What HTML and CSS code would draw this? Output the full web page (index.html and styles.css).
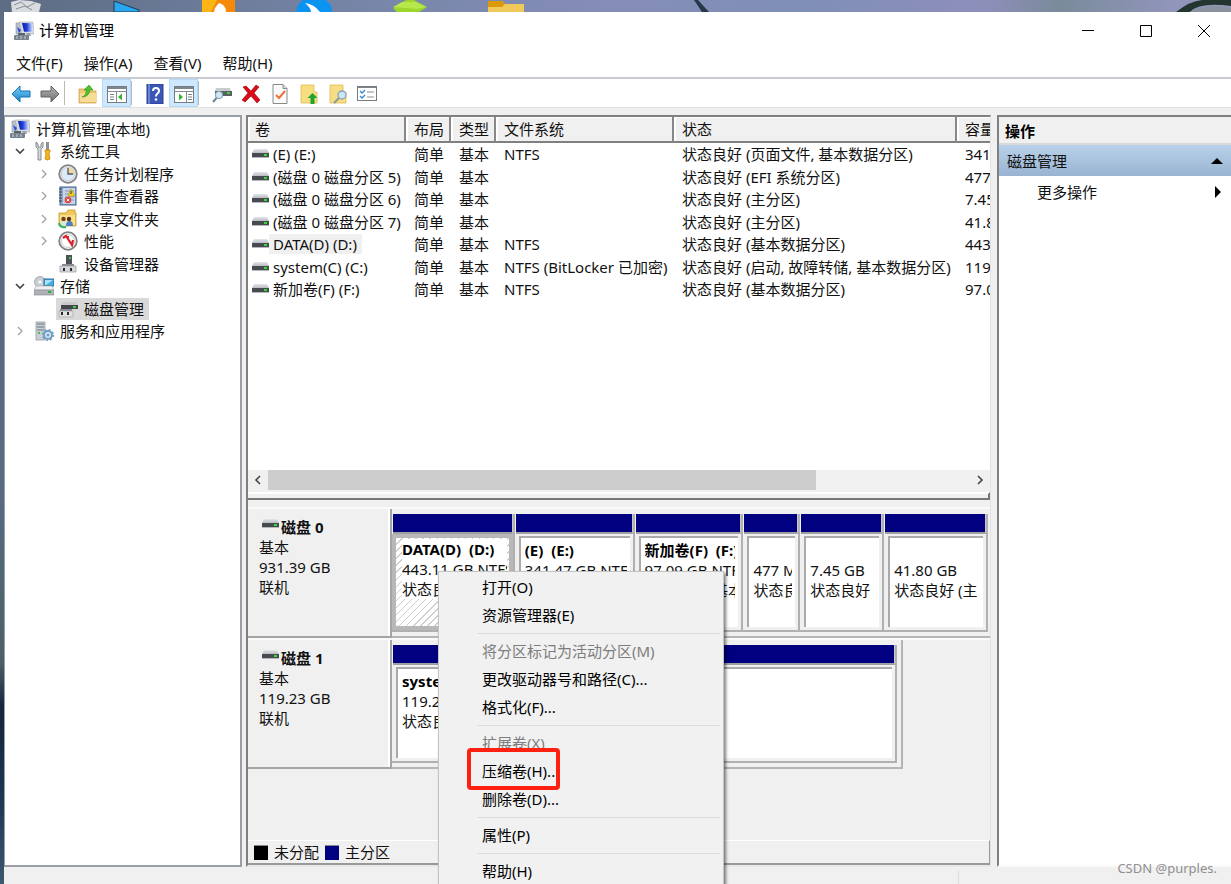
FILE: index.html
```html
<!DOCTYPE html>
<html lang="zh-CN">
<head>
<meta charset="utf-8">
<title>计算机管理</title>
<link rel="stylesheet" href="styles.css">
</head>
<body>
<svg class="defs" aria-hidden="true">
  <defs>
    <linearGradient id="gBlue" x1="0" y1="0" x2="1" y2="0"><stop offset="0" stop-color="#0b1fa8"/><stop offset=".45" stop-color="#1c3bd8"/><stop offset="1" stop-color="#cfe0ff"/></linearGradient>
    <linearGradient id="gArrow" x1="0" y1="0" x2="0" y2="1"><stop offset="0" stop-color="#7fd0f5"/><stop offset="1" stop-color="#1483cf"/></linearGradient>
    <linearGradient id="gGrey" x1="0" y1="0" x2="0" y2="1"><stop offset="0" stop-color="#b5b5b5"/><stop offset="1" stop-color="#6f6f6f"/></linearGradient>
    <linearGradient id="gDisk" x1="0" y1="0" x2="0" y2="1"><stop offset="0" stop-color="#e4e6ea"/><stop offset="1" stop-color="#b9bcc2"/></linearGradient>
  </defs>
  <symbol id="i-computer" viewBox="0 0 20 20">
    <path d="M2 2h5v11H2z" fill="#b8bfc9" stroke="#8f97a3" stroke-width=".6"/>
    <path d="M5 1l14 0 1 12H8z" fill="#d9dde2" stroke="#a2a8b0" stroke-width=".6"/>
    <path d="M8 2l9.500.2 1 8.600H10z" fill="url(#gBlue)"/>
    <path d="M3 6l4 3-2 3z" fill="#2a4bd8"/>
    <path d="M12 12l4 0 1 3h-4z" fill="#9aa1aa"/>
    <rect x="4" y="12" width="7" height="3" fill="#59636e"/>
    <rect x="0" y="14" width="15" height="5" rx="1" fill="#77828e"/>
    <path d="M3 15v3M7 15v3M11 15v3" stroke="#c9d1d8"/>
  </symbol>
  <symbol id="i-disk" viewBox="0 0 17 10">
    <path d="M2 0h13l2 4H0z" fill="url(#gDisk)"/>
    <rect y="4" width="17" height="4" fill="#474b50"/>
    <rect y="8" width="17" height="1" fill="#b4b7bb"/>
    <rect x="12" y="5" width="3" height="2" fill="#2fe02f"/>
  </symbol>
  <symbol id="i-tools" viewBox="0 0 20 20">
    <path d="M2 1v5l2 2v11h3V8l2-2V1L7 3v3H4V3z" fill="#d5d8dc" stroke="#7d8287" stroke-width=".9"/>
    <path d="M12 1h3v8h-3z" fill="#8d9297"/><path d="M11 9h5v2l-1 1 1 6q-2.500 2-5 0l1-6-1-1z" fill="#f4b51a" stroke="#c17f05" stroke-width=".7"/>
  </symbol>
  <symbol id="i-clock" viewBox="0 0 20 20">
    <circle cx="10" cy="10" r="8.800" fill="#eef0f3" stroke="#838487" stroke-width="1.800"/>
    <circle cx="10" cy="10" r="6.800" fill="#dce9f7" stroke="#b8bec6" stroke-width=".7"/>
    <path d="M10 10V3.500a6.500 6.500 0 0 1 6.500 6.500z" fill="#f4d99a"/>
    <path d="M10 4v6h5" fill="none" stroke="#4c5665" stroke-width="1.300"/>
  </symbol>
  <symbol id="i-event" viewBox="0 0 20 20">
    <rect x="2" y="1" width="16" height="18" fill="#93a9cb" stroke="#44618f"/>
    <rect x="5" y="2" width="12" height="16" fill="#c6d3e8"/>
    <path d="M7 5h9M7 8h9M7 11h9M7 14h9" stroke="#879bbd"/>
    <path d="M1 3h3M1 6h3M1 9h3M1 12h3M1 15h3" stroke="#35425b"/>
    <path d="M13 3l4 7h-7z" fill="#f8d21c" stroke="#bb9200" stroke-width=".6"/><path d="M13 5v3" stroke="#333"/>
    <circle cx="10" cy="14" r="3.300" fill="#e2453d"/><path d="M8.800 12.800l2.400 2.400m0-2.400l-2.400 2.400" stroke="#fff"/>
  </symbol>
  <symbol id="i-share" viewBox="0 0 20 20">
    <path d="M1 4h7l2-3h7v3h1v13H1z" fill="#efc95c" stroke="#c99a2d" stroke-width=".8"/>
    <path d="M2 6h15v10H2z" fill="#fae08c"/>
    <circle cx="5.500" cy="10" r="2.200" fill="#6d4222"/><circle cx="11" cy="10" r="2.200" fill="#553018"/>
    <path d="M2 17q0-5 4-5t4 5z" fill="#d8e6dc"/><path d="M8 17q0-5 3.500-5t3.500 5z" fill="#4b80c2"/>
    <path d="M1 14q1 5 7 4" fill="none" stroke="#30b35e" stroke-width="2"/>
  </symbol>
  <symbol id="i-perf" viewBox="0 0 20 20">
    <circle cx="10" cy="10" r="8.800" fill="#f5f6f7" stroke="#808184" stroke-width="1.800"/>
    <circle cx="10" cy="10" r="6.500" fill="#fff" stroke="#b9bbbe" stroke-width=".7"/>
    <path d="M5 7l3-2 6 9 1-5M9 6l2 0" fill="none" stroke="#e01f26" stroke-width="2.200"/>
  </symbol>
  <symbol id="i-device" viewBox="0 0 20 20">
    <path d="M8 1h6v9H8z" fill="#4c5157"/><rect x="11" y="3" width="2" height="2" fill="#35d03a"/>
    <path d="M4 10h12v2H4z" fill="#85898e"/><path d="M2 12h16v6H2z" fill="#d5d8db" stroke="#96999d" stroke-width=".7"/>
    <path d="M6 14v3M13 14v3" stroke="#272a2d" stroke-width="2"/>
  </symbol>
  <symbol id="i-storage" viewBox="0 0 20 20">
    <circle cx="6" cy="6" r="5.500" fill="#c9ced4" stroke="#999fa6" stroke-width=".8"/><circle cx="6" cy="6" r="1.600" fill="#fff"/>
    <rect x="10" y="3" width="10" height="7" fill="#45aee0" stroke="#2a6f98"/><path d="M11 4h8l-7 5h-1z" fill="#a6e0fa"/>
    <path d="M2 10h16l2 4H0z" fill="#eff0f1" stroke="#a4a7aa" stroke-width=".6"/><rect y="14" width="20" height="5" fill="#aeb1b5" stroke="#85888c" stroke-width=".6"/>
    <path d="M14 16h3" stroke="#25b536" stroke-width="2"/>
  </symbol>
  <symbol id="i-diskmgmt" viewBox="0 0 20 20">
    <path d="M5 3h13l2 3H3z" fill="#c7c9cc"/><rect x="3" y="6" width="17" height="4" fill="#43474b"/><rect x="15" y="7" width="3" height="2" fill="#38d13c"/>
    <rect x="2" y="10" width="12" height="2" fill="#888b8f"/><path d="M1 12h14v6H1z" fill="#e0e2e4" stroke="#9b9ea1" stroke-width=".6"/>
    <path d="M4 13v3M10 13v3" stroke="#26292c" stroke-width="2"/>
  </symbol>
  <symbol id="i-service" viewBox="0 0 20 20">
    <path d="M2 1h9v18H2z" fill="#c9ced3" stroke="#8b9299" stroke-width=".7"/><path d="M3 3h7M3 6h7M3 9h7" stroke="#6e7780"/><rect x="4" y="11" width="2" height="2" fill="#3fc24b"/>
    <circle cx="14" cy="14" r="4" fill="#dfeaf4" stroke="#6c9dc5" stroke-width="2"/><circle cx="14" cy="14" r="5.300" fill="none" stroke="#6c9dc5" stroke-width="1.500" stroke-dasharray="2 2.160"/>
    <circle cx="14" cy="14" r="1.500" fill="#6c9dc5"/>
  </symbol>
  <symbol id="i-back" viewBox="0 0 20 20"><path d="M1 10l8-8v5h10v6H9v5z" fill="url(#gArrow)" stroke="#1673ad" stroke-width="1"/></symbol>
  <symbol id="i-forward" viewBox="0 0 20 20"><path d="M19 10l-8-8v5H1v6h10v5z" fill="url(#gGrey)" stroke="#626262" stroke-width="1"/></symbol>
  <symbol id="i-up" viewBox="0 0 20 20">
    <path d="M1 5h6l2 2h9v12H1z" fill="#efc970" stroke="#c7983a" stroke-width=".7"/><path d="M2 9h16v9H2z" fill="#f7dc95"/>
    <path d="M4 13q4-1 4.500-7H6l5-5 4 5h-3q-1 7-8 7z" fill="#4ec32b" stroke="#2e8d16" stroke-width=".6"/>
  </symbol>
  <symbol id="i-tree" viewBox="0 0 20 20">
    <rect x=".5" y="2.500" width="19" height="16" fill="#fff" stroke="#777c82"/><path d="M1 4h18" stroke="#7e858d" stroke-width="2"/><path d="M1 7.500h18M9.500 8v10" stroke="#868c93"/>
    <path d="M3 10.500h4M3 13h4M3 15.500h4" stroke="#7a8087"/><path d="M15 9.500v7l-4-3.500z" fill="#36b52d"/>
  </symbol>
  <symbol id="i-actions" viewBox="0 0 20 20">
    <rect x=".5" y="2.500" width="19" height="16" fill="#fff" stroke="#777c82"/><path d="M1 4h18" stroke="#7e858d" stroke-width="2"/><path d="M1 7.500h18M12.500 8v10" stroke="#868c93"/>
    <path d="M14 10.500h4M14 13h4M14 15.500h4" stroke="#7a8087"/><path d="M5 9.500v7l4-3.500z" fill="#36b52d"/>
  </symbol>
  <symbol id="i-help" viewBox="0 0 20 20">
    <rect x="2" y="0" width="16" height="20" fill="#3a57b5" stroke="#27408e"/><path d="M4 0v20" stroke="#7e95dd" stroke-width="1.500"/>
    <path d="M8 7q0-3 3-3t3 3q0 1.500-2 3-1 .8-1 2.500" fill="none" stroke="#fff" stroke-width="2"/><circle cx="11" cy="15.500" r="1.300" fill="#fff"/>
  </symbol>
  <symbol id="i-find" viewBox="0 0 20 20">
    <path d="M4 4h14l1 3H3z" fill="#c9cccf"/><rect x="3" y="7" width="17" height="5" fill="#5a5f64"/><rect x="15" y="8" width="3" height="2" fill="#32d63a"/>
    <circle cx="7" cy="11" r="3.500" fill="#d4e9f6" stroke="#86a5b9" stroke-width="1.200"/><path d="M4.500 14L1 18" stroke="#70859a" stroke-width="2"/>
  </symbol>
  <symbol id="i-delete" viewBox="0 0 20 20"><path d="M2 3l3-1 5 5 5-6 3 2-5 6 6 7-3 3-6-7-6 6-3-2 6-7z" fill="#d80c18" stroke="#a8000a" stroke-width=".6"/></symbol>
  <symbol id="i-check" viewBox="0 0 20 20"><path d="M3 .5h10l4 4v15H3z" fill="#fbfbfb" stroke="#8a8a8a"/><path d="M13 .5v4h4" fill="#ddd" stroke="#8a8a8a"/><path d="M6 11l3 3 6-7" fill="none" stroke="#ef6f34" stroke-width="2"/></symbol>
  <symbol id="i-folderup" viewBox="0 0 20 20"><path d="M2 1h13v7h3v11H2z" fill="#f8de83" stroke="#dfbb50" stroke-width=".8"/><path d="M13.500 9l-5 5h3v6h4v-6h3z" fill="#1fa42f"/></symbol>
  <symbol id="i-folderfind" viewBox="0 0 20 20"><path d="M2 1h13v7h3v11H2z" fill="#f8de83" stroke="#dfbb50" stroke-width=".8"/><circle cx="14" cy="11" r="4" fill="#cde6f5" stroke="#86a3b8" stroke-width="1.300"/><path d="M11 14L6 19" stroke="#8b98a3" stroke-width="2"/></symbol>
  <symbol id="i-list" viewBox="0 0 20 20"><rect x=".5" y="2.500" width="19" height="14" fill="#fff" stroke="#777c82"/><path d="M1 3.500h18" stroke="#7e858d"/><path d="M3 7l2 2 3-3M3 12l2 2 3-3" fill="none" stroke="#3087d6" stroke-width="1.300"/><path d="M10 8h7M10 13h7" stroke="#8a8f94"/></symbol>
</svg>

<div class="desktop">
  <svg class="shortcuts" viewBox="0 0 1231 12" preserveAspectRatio="xMinYMin slice" aria-hidden="true">
    <path d="M11 2l8-2 12 1 10 3-2 8H12z" fill="#d9dcdf"/><path d="M14 5l7-3 6 5 8-4M16 9l9-3 7 4" fill="none" stroke="#8b9197"/>
    <path d="M114 1l25 9v2h-25z" fill="#27a7ef" stroke="#24384d"/>
    <path d="M202 0h33v12h-33z" fill="#f58a0a"/><path d="M202 0h15l-6 12h-9z" fill="#fdb513"/><path d="M219 3q7 2 7 9h-12q0-4 5-9z" fill="#fff"/>
    <path d="M296 12q1-8 7-12h22q7 3 7 12z" fill="#0a94f0"/><path d="M305 3q9 1 15 9h-9q0-4-6-9z" fill="#fff"/>
    <path d="M393 8l13-8h8l13 7-8 5h-22z" fill="#9dd62f"/><path d="M393 7l9-5h14l10 5-9 2z" fill="#b5e84b"/>
    <path d="M488 1h14l3 3h19v8h-36z" fill="#f0c95b"/><path d="M488 1h14l3 3-3 3h-14z" fill="#d99a05"/>
    <path d="M694 0h4l11 12h-7z" fill="#24384a"/>
    <path d="M1176 12q14-11 26-12h29v6q-32-4-41 6z" fill="#22352f"/><path d="M1190 12q15-9 41-4v4z" fill="#88939e"/>
  </svg>

  <div class="window">
    <header class="titlebar">
      <svg class="icon"><use href="#i-computer"/></svg>
      <h1 class="title">计算机管理</h1>
      <div class="controls">
        <button class="control" aria-label="最小化"><svg viewBox="0 0 12 12"><path d="M0 5.500h12"/></svg></button>
        <button class="control" aria-label="最大化"><svg viewBox="0 0 12 12"><path d="M.5.500h11v11H.5z"/></svg></button>
        <button class="control" aria-label="关闭"><svg viewBox="0 0 12 12"><path d="M0 0l12 12M12 0L0 12"/></svg></button>
      </div>
    </header>

    <nav class="menubar">
      <button>文件(F)</button><button>操作(A)</button><button>查看(V)</button><button>帮助(H)</button>
    </nav>

    <div class="toolbar">
      <button class="tool" aria-label="后退"><svg class="icon"><use href="#i-back"/></svg></button>
      <button class="tool" aria-label="前进"><svg class="icon"><use href="#i-forward"/></svg></button>
      <span class="tool-sep"></span>
      <button class="tool" aria-label="上一级"><svg class="icon"><use href="#i-up"/></svg></button>
      <button class="tool on" aria-label="控制台树"><svg class="icon"><use href="#i-tree"/></svg></button>
      <span class="tool-sep"></span>
      <button class="tool" aria-label="帮助"><svg class="icon"><use href="#i-help"/></svg></button>
      <button class="tool on" aria-label="操作窗格"><svg class="icon"><use href="#i-actions"/></svg></button>
      <span class="tool-sep"></span>
      <button class="tool" aria-label="重新扫描"><svg class="icon"><use href="#i-find"/></svg></button>
      <button class="tool" aria-label="删除"><svg class="icon"><use href="#i-delete"/></svg></button>
      <button class="tool" aria-label="属性"><svg class="icon"><use href="#i-check"/></svg></button>
      <button class="tool" aria-label="打开"><svg class="icon"><use href="#i-folderup"/></svg></button>
      <button class="tool" aria-label="浏览"><svg class="icon"><use href="#i-folderfind"/></svg></button>
      <button class="tool" aria-label="设置"><svg class="icon"><use href="#i-list"/></svg></button>
    </div>

    <main class="content">
      <aside class="tree">
        <ul class="nodes">
          <li class="node root"><svg class="icon"><use href="#i-computer"/></svg><span class="name">计算机管理(本地)</span></li>
          <li class="node l1"><svg class="caret open" viewBox="0 0 10 10"><path d="M1 3l4 4 4-4"/></svg><svg class="icon"><use href="#i-tools"/></svg><span class="name">系统工具</span></li>
          <li class="node l2"><svg class="caret" viewBox="0 0 10 10"><path d="M3 1l4 4-4 4"/></svg><svg class="icon"><use href="#i-clock"/></svg><span class="name">任务计划程序</span></li>
          <li class="node l2"><svg class="caret" viewBox="0 0 10 10"><path d="M3 1l4 4-4 4"/></svg><svg class="icon"><use href="#i-event"/></svg><span class="name">事件查看器</span></li>
          <li class="node l2"><svg class="caret" viewBox="0 0 10 10"><path d="M3 1l4 4-4 4"/></svg><svg class="icon"><use href="#i-share"/></svg><span class="name">共享文件夹</span></li>
          <li class="node l2"><svg class="caret" viewBox="0 0 10 10"><path d="M3 1l4 4-4 4"/></svg><svg class="icon"><use href="#i-perf"/></svg><span class="name">性能</span></li>
          <li class="node l2"><span class="caret"></span><svg class="icon"><use href="#i-device"/></svg><span class="name">设备管理器</span></li>
          <li class="node l1"><svg class="caret open" viewBox="0 0 10 10"><path d="M1 3l4 4 4-4"/></svg><svg class="icon"><use href="#i-storage"/></svg><span class="name">存储</span></li>
          <li class="node l2"><span class="caret"></span><span class="selected"><svg class="icon"><use href="#i-diskmgmt"/></svg><span class="name">磁盘管理</span></span></li>
          <li class="node l1"><svg class="caret" viewBox="0 0 10 10"><path d="M3 1l4 4-4 4"/></svg><svg class="icon"><use href="#i-service"/></svg><span class="name">服务和应用程序</span></li>
        </ul>
      </aside>

      <section class="center">
        <div class="volumes">
          <table class="vol-table">
            <colgroup><col class="c-vol"><col class="c-short"><col class="c-short"><col class="c-fs"><col class="c-state"><col class="c-cap"></colgroup>
            <thead><tr><th>卷</th><th>布局</th><th>类型</th><th>文件系统</th><th>状态</th><th>容量</th></tr></thead>
            <tbody>
              <tr><td><div class="vol"><svg class="disk"><use href="#i-disk"/></svg><span>(E) (E:)</span></div></td><td>简单</td><td>基本</td><td>NTFS</td><td>状态良好 (页面文件, 基本数据分区)</td><td>341.47 GB</td></tr>
              <tr><td><div class="vol"><svg class="disk"><use href="#i-disk"/></svg><span>(磁盘 0 磁盘分区 5)</span></div></td><td>简单</td><td>基本</td><td></td><td>状态良好 (EFI 系统分区)</td><td>477 MB</td></tr>
              <tr><td><div class="vol"><svg class="disk"><use href="#i-disk"/></svg><span>(磁盘 0 磁盘分区 6)</span></div></td><td>简单</td><td>基本</td><td></td><td>状态良好 (主分区)</td><td>7.45 GB</td></tr>
              <tr><td><div class="vol"><svg class="disk"><use href="#i-disk"/></svg><span>(磁盘 0 磁盘分区 7)</span></div></td><td>简单</td><td>基本</td><td></td><td>状态良好 (主分区)</td><td>41.80 GB</td></tr>
              <tr><td><div class="vol"><svg class="disk"><use href="#i-disk"/></svg><span class="marked">DATA(D) (D:)</span></div></td><td>简单</td><td>基本</td><td>NTFS</td><td>状态良好 (基本数据分区)</td><td>443.11 GB</td></tr>
              <tr><td><div class="vol"><svg class="disk"><use href="#i-disk"/></svg><span>system(C) (C:)</span></div></td><td>简单</td><td>基本</td><td>NTFS (BitLocker 已加密)</td><td>状态良好 (启动, 故障转储, 基本数据分区)</td><td>119.23 GB</td></tr>
              <tr><td><div class="vol"><svg class="disk"><use href="#i-disk"/></svg><span>新加卷(F) (F:)</span></div></td><td>简单</td><td>基本</td><td>NTFS</td><td>状态良好 (基本数据分区)</td><td>97.09 GB</td></tr>
            </tbody>
          </table>
        </div>
        <div class="scrollbar">
          <button class="scroll-btn" aria-label="向左滚动"><svg class="caret open" viewBox="0 0 10 10"><path d="M7 1L3 5l4 4"/></svg></button>
          <div class="track"><div class="thumb"></div></div>
          <button class="scroll-btn" aria-label="向右滚动"><svg class="caret open" viewBox="0 0 10 10"><path d="M3 1l4 4-4 4"/></svg></button>
        </div>
        <div class="splitter"></div>

        <div class="graph">
          <div class="disk-row">
            <div class="disk-label"><div class="disk-name"><svg class="disk"><use href="#i-disk"/></svg><b>磁盘 0</b></div><p>基本</p><p>931.39 GB</p><p>联机</p></div>
            <div class="parts parts-0">
              <div class="part active"><div class="bar"></div><div class="box"><div class="info"><b>DATA(D)&nbsp; (D:)</b><p>443.11 GB NTFS</p><p>状态良好</p></div></div></div>
              <div class="part"><div class="bar"></div><div class="box"><div class="info"><b>(E)&nbsp; (E:)</b><p>341.47 GB NTFS</p><p>状态良好</p></div></div></div>
              <div class="part"><div class="bar"></div><div class="box"><div class="info"><b>新加卷(F)&nbsp; (F:)</b><p>97.09 GB NTFS</p><p>状态良好 (基本数据分区)</p></div></div></div>
              <div class="part"><div class="bar"></div><div class="box"><div class="info"><b>&nbsp;</b><p>477 MB</p><p>状态良好</p></div></div></div>
              <div class="part"><div class="bar"></div><div class="box"><div class="info"><b>&nbsp;</b><p>7.45 GB</p><p>状态良好</p></div></div></div>
              <div class="part"><div class="bar"></div><div class="box"><div class="info"><b>&nbsp;</b><p>41.80 GB</p><p>状态良好 (主</p></div></div></div>
            </div>
          </div>
          <div class="disk-row">
            <div class="disk-label"><div class="disk-name"><svg class="disk"><use href="#i-disk"/></svg><b>磁盘 1</b></div><p>基本</p><p>119.23 GB</p><p>联机</p></div>
            <div class="parts parts-1">
              <div class="part"><div class="bar"></div><div class="box"><div class="info"><b>system(C)&nbsp; (C:)</b><p>119.23 GB NTFS</p><p>状态良好</p></div></div></div>
            </div>
          </div>
        </div>
        <div class="legend"><span class="swatch unallocated"></span>未分配<span class="swatch primary"></span>主分区</div>
      </section>

      <aside class="actions">
        <h2 class="actions-head">操作</h2>
        <button class="actions-group">磁盘管理<svg class="tri" viewBox="0 0 12 12"><path d="M0 9l6-6 6 6z"/></svg></button>
        <button class="actions-item">更多操作<svg class="tri" viewBox="0 0 12 12"><path d="M3 0l6 6-6 6z"/></svg></button>
      </aside>
    </main>
    <footer class="status"><span></span><span></span></footer>
  </div>

  <div class="context-menu" role="menu">
    <button role="menuitem">打开(O)</button>
    <button role="menuitem">资源管理器(E)</button>
    <hr>
    <button role="menuitem" disabled>将分区标记为活动分区(M)</button>
    <button role="menuitem">更改驱动器号和路径(C)...</button>
    <button role="menuitem">格式化(F)...</button>
    <hr>
    <button role="menuitem" disabled>扩展卷(X)</button>
    <button role="menuitem" class="highlighted">压缩卷(H)...</button>
    <button role="menuitem">删除卷(D)...</button>
    <hr>
    <button role="menuitem">属性(P)</button>
    <hr>
    <button role="menuitem">帮助(H)</button>
  </div>
  <div class="watermark">CSDN @purples.</div>
</div>
</body>
</html>
```
FILE: styles.css
```css
*, *::after { box-sizing: border-box; }
body {
  margin: 0;
  font: 15px/20px "Noto Sans", "Noto Sans CJK SC", sans-serif;
  color: #111;
}
h1, h2, p, ul { margin: 0; padding: 0; font-size: 15px; }
ul { list-style: none; }
button { font: inherit; color: inherit; background: none; border: 0; padding: 0; margin: 0; text-align: left; }
svg { display: block; flex: none; }
.defs { position: absolute; width: 0; height: 0; }
.icon { width: 20px; height: 20px; }
.disk { width: 17px; height: 10px; }
.caret { width: 10px; height: 10px; flex: none; fill: none; stroke: #a0a0a0; stroke-width: 1.300; }
.caret.open { stroke: #444; stroke-width: 1.600; }

.desktop {
  position: relative;
  display: flex;
  flex-direction: column;
  height: 100vh;
  overflow: hidden;
  background: linear-gradient(#5c6c83 0, #586b84 55%, #4f6570 67%, #4b6068 75%, #14253d 80%, #1e3452 90%, #3d5870 100%);
}
.shortcuts { width: 100%; height: 12px; background: linear-gradient(90deg, #5d6c83, #7786a8 30%, #858db8 50%, #7f8fb5 65%, #8d8fba 80%, #7a8b9a 86%, #9095b9 95%); }

.window { flex: 1; min-height: 0; margin-left: 4px; display: flex; flex-direction: column; background: #f0f0f0; }
.titlebar { display: flex; align-items: center; height: 38px; padding: 0 0 0 10px; background: #fff; }
.title { flex: 1; padding: 0 0 2px 5px; font-weight: 400; color: #000; }
.controls { display: flex; margin-right: -2px; }
.control { width: 58px; height: 38px; display: flex; justify-content: center; align-items: center; }
.control svg { width: 12px; height: 12px; fill: none; stroke: #000; }
.menubar { display: flex; gap: 21px; height: 29px; padding: 0 12px 1px; background: #fff; border-bottom: 2px solid #c8ccd1; }
.toolbar { display: flex; height: 29px; padding-left: 2px; background: #fff; border-bottom: 1px solid #e2e2e2; }
.tool { width: 29px; height: 28px; display: flex; align-items: center; justify-content: center; padding-top: 1px; }
.tool.on { background: #cde8ff; border: 1px solid #b4daf8; }
.tool-sep { width: 9px; border-left: 1px solid #b8b8b8; margin: 2px 0; }

.content { flex: 1; min-height: 0; display: grid; grid-template-columns: 238px minmax(0, 745px) minmax(200px, 1fr); column-gap: 4px; padding-top: 7px; }
.tree { background: #fff; border: 2px solid #9a9fa6; border-left-width: 1px; }
.node { display: flex; align-items: center; height: 23px; white-space: nowrap; }
.node:nth-child(even) { height: 22px; }
.root { padding-left: 5px; }
.l1 { padding-left: 10px; }
.l2 { padding-left: 34px; }
.node .caret { margin-right: 9px; }
.name { padding: 0 5px 0 6px; }
.selected { display: flex; align-items: center; height: 22px; margin-left: -2px; padding-left: 2px; background: #d9d9d9; }

.center { display: flex; flex-direction: column; min-height: 0; border-top: 2px solid #808080; border-left: 2px solid #808080; border-right: 1px solid #e2e2e2; border-bottom: 2px solid #e8e8e8; }
.volumes { flex: 1 1 353px; min-height: 100px; overflow: hidden; background: #fff; }
.vol-table { width: 793px; table-layout: fixed; border-collapse: separate; border-spacing: 0; }
.c-vol { width: 158px; }
.c-short { width: 45px; }
.c-fs { width: 178px; }
.c-state { width: 283px; }
.c-cap { width: 84px; }
.vol-table th { height: 26px; padding: 0 0 0 8px; font-weight: 400; text-align: left; white-space: nowrap; background: #f0f0f0; border-right: 2px solid #888; border-bottom: 2px solid #808080; box-shadow: inset 2px 1px 0 #fff; }
.vol-table th:first-child { padding-left: 7px; }
.vol-table td { height: 22px; padding: 0 0 0 8px; vertical-align: middle; white-space: nowrap; overflow: hidden; }
.vol-table tr:nth-child(even) td { height: 23px; }
.vol-table td:first-child { padding-left: 4px; }
.vol { display: flex; align-items: center; }
.vol span { padding: 0 5px 0 4px; }
.marked { background: #f0f0f0; }
.scrollbar { display: flex; height: 22px; padding-bottom: 2px; background: #f0f0f0; }
.scroll-btn { width: 20px; display: flex; align-items: center; justify-content: center; }
.track { flex: 1; }
.thumb { width: 78%; height: 100%; background: #cdcdcd; }
.splitter { height: 8px; border-bottom: 2px solid #777; border-right: 2px solid #777; border-top: 2px solid #fff; }

.graph { flex: 0 1 340px; padding-top: 7px; overflow: hidden; }
.disk-row { display: flex; height: 131px; border-top: 2px solid #fafafa; }
.disk-label { width: 144px; padding: 8px 11px; border-right: 2px solid #a5a5a5; border-bottom: 2px solid #a5a5a5; box-shadow: inset -2px 0 #fff; }
.disk-name { display: flex; gap: 2px; padding-left: 3px; }
.disk-name .disk { margin-top: 2px; }
.parts { flex: 1; display: grid; min-width: 0; padding: 5px 2px 4px 0; border-bottom: 2px solid #b5b5b5; }
.parts-0 { grid-template-columns: 123fr 120fr 109fr 57fr 84fr 104fr; }
.parts-1 { flex: 0 1 511px; padding-right: 4px; border-right: 2px solid #b5b5b5; }
.part { min-width: 0; display: flex; flex-direction: column; border-right: 2px solid #b0b0b0; border-bottom: 2px solid #b0b0b0; }
.bar { height: 20px; margin-left: 1px; background: #000080; border-bottom: 2px solid #a0a0a0; border-right: 1px solid #c8c8c8; }
.box { flex: 1; min-height: 0; margin: 2px 3px 3px 4px; padding: 2px 3px 0 4px; background: #fff; border-top: 2px solid #aaa; border-left: 2px solid #aaa; }
.active .box { margin: 0; padding: 1px 2px 0 6px; border: 4px solid #b8b8b8; background: repeating-linear-gradient(135deg, #fff 0 4px, #d0d0d0 4px 5px); }
.info { overflow: hidden; white-space: nowrap; }
.active .info { background: #fff; }
.info b { display: block; color: #000; }
.legend { display: flex; align-items: center; gap: 6px; height: 25px; padding-left: 6px; border-top: 1px solid #fff; border-right: 1px solid #999; border-bottom: 2px solid #999; }
.swatch { width: 14px; height: 15px; border-top: 1px solid #888; }
.unallocated { background: #000; }
.primary { background: #000080; }

.actions { margin-left: 2px; background: #fff; border-top: 2px solid #808080; border-left: 2px solid #808080; border-bottom: 2px solid #fafafa; }
.actions-head { height: 28px; padding: 4px 6px; color: #000; background: #f0f0f0; border-bottom: 2px solid #d9d9d9; }
.actions-group, .actions-item { display: flex; align-items: center; justify-content: space-between; width: 100%; height: 31px; padding: 0 8px; }
.actions-group { background: linear-gradient(#b9d1ea, #99b4d1); }
.actions-item { padding-left: 38px; padding-right: 7px; }
.tri { width: 12px; height: 12px; fill: #000; }
.status { display: flex; height: 17px; padding-top: 3px; }
.status span:first-child { flex: 1; max-width: 955px; border-right: 1px solid #dcdcdc; }

.context-menu { position: absolute; left: 438px; top: 571px; width: 286px; padding: 2px; background: #f1f1f1; border: 1px solid #c4c4c4; box-shadow: 2px 2px 3px rgba(0, 0, 0, .5); }
.context-menu button { position: relative; display: block; width: 100%; height: 28px; padding-left: 41px; line-height: 20px; padding-bottom: 2px; color: #000; }
.context-menu button:disabled { color: #7d7d7d; }
.context-menu hr { height: 1px; margin: 3px 1px 4px 36px; border: 0; background: #dcdcdc; }
.highlighted::after { content: ""; position: absolute; left: 26px; top: -10px; width: 93px; height: 42px; border: 4px solid #fe2112; border-radius: 4px; }
.watermark { position: absolute; right: 14px; bottom: 6px; font-size: 13px; color: #8f8f8f; }
```
